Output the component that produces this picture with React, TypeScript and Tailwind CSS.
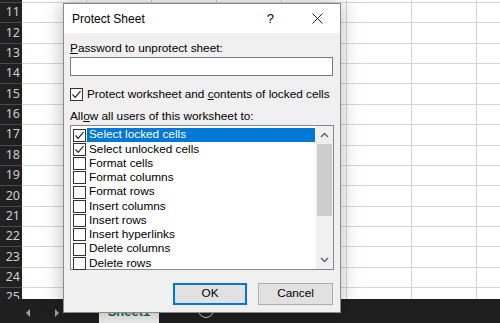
import React from "react";

const rows = [10, 11, 12, 13, 14, 15, 16, 17, 18, 19, 20, 21, 22, 23, 24, 25, 26];
const cols = [0, 1, 2, 3, 4, 5, 6, 7];

const items: { label: string; checked: boolean; selected?: boolean }[] = [
  { label: "Select locked cells", checked: true, selected: true },
  { label: "Select unlocked cells", checked: true },
  { label: "Format cells", checked: false },
  { label: "Format columns", checked: false },
  { label: "Format rows", checked: false },
  { label: "Insert columns", checked: false },
  { label: "Insert rows", checked: false },
  { label: "Insert hyperlinks", checked: false },
  { label: "Delete columns", checked: false },
  { label: "Delete rows", checked: false },
];

function Check({ checked }: { checked: boolean }) {
  return (
    <div className="w-[13px] h-[13px] shrink-0 border border-[#333] bg-white flex items-center justify-center">
      {checked && (
        <svg width="11" height="11" viewBox="0 0 11 11">
          <polyline points="1.5,5.5 4.2,8.3 9.5,2.2" fill="none" stroke="#222" strokeWidth="1.2" />
        </svg>
      )}
    </div>
  );
}

export default function App() {
  return (
    <div className="relative w-[500px] h-[323px] overflow-hidden bg-white font-['Liberation_Sans',Arial,sans-serif]">
      {/* spreadsheet */}
      <div className="flex flex-col h-full">
        <div className="h-[299px] overflow-hidden">
          <div className="flex flex-col -mt-[17.36px]">
            {rows.map((r) => (
              <div key={r} className="flex h-[20.36px] shrink-0">
                <div className="w-[22px] shrink-0 bg-[#202020] border-b border-[#4a4a4a] flex items-center justify-end pr-[2px] text-[12.5px] text-[#cfcfcf] font-['Noto_Sans',sans-serif]">
                  {r}
                </div>
                {cols.map((c) => (
                  <div key={c} className="w-[65px] shrink-0 border-r border-b border-[#d6d6d6] bg-white" />
                ))}
              </div>
            ))}
          </div>
        </div>
        <div className="h-[24px] bg-[#1f1f1f] flex items-start relative">
          <div className="ml-[26px] mt-[10px] w-0 h-0 border-y-[4px] border-y-transparent border-r-[4px] border-r-[#a0a0a0]" />
          <div className="ml-[25px] mt-[10px] w-0 h-0 border-y-[4px] border-y-transparent border-l-[4px] border-l-[#a0a0a0]" />
          <div className="ml-[40px] w-[60px] h-[24px] bg-[#f0f0f0] flex justify-center">
            <span className="text-[13px] font-bold text-[#1d6b3d] leading-none mt-[6px]">Sheet1</span>
          </div>
          <div className="ml-[39px] mt-[3px] w-[16px] h-[16px] rounded-full border border-[#c8c8c8]" />
        </div>
      </div>

      {/* dialog */}
      <div className="absolute left-[63px] top-[3px] w-[278px] h-[310px] border border-[#8a8a8a] bg-[#f0f0f0] shadow-[0_0_18px_rgba(0,0,0,0.28)] flex flex-col text-[11.8px] text-black whitespace-nowrap">
        <div className="h-[29px] bg-white flex items-center shrink-0">
          <span className="ml-[8px] text-[12px]">Protect Sheet</span>
          <span className="ml-auto mr-[38px] text-[13px]">?</span>
          <svg width="11" height="11" viewBox="0 0 11 11" className="mr-[17px]">
            <path d="M0.5 0.5 L10.5 10.5 M10.5 0.5 L0.5 10.5" stroke="#222" strokeWidth="1" />
          </svg>
        </div>
        <div className="flex flex-col px-[6px] pt-[7px]">
          <div className="h-[16px] leading-[16px]">
            <span className="underline">P</span>assword to unprotect sheet:
          </div>
          <div className="mt-[1px] h-[19px] w-[263px] bg-white border border-[#7a7a7a]" />
          <div className="mt-[12px] flex items-center h-[13px]">
            <Check checked />
            <span className="ml-[4px]">
              Protect worksheet and <span className="underline">c</span>ontents of locked cells
            </span>
          </div>
          <div className="mt-[7px] h-[16px] leading-[16px]">
            All<span className="underline">o</span>w all users of this worksheet to:
          </div>
          <div className="mt-[1px] h-[145px] w-[264px] bg-white border border-[#828790] flex">
            <div className="flex-1 flex flex-col pt-[2px] pl-[2px]">
              {items.map((it) => (
                <div key={it.label} className="flex items-center h-[14.25px] shrink-0">
                  <Check checked={it.checked} />
                  <div
                    className={
                      it.selected
                        ? "ml-[1px] flex-1 h-[14px] flex items-center pl-[2px] bg-[#0078d7] text-white"
                        : "ml-[1px] flex-1 h-[14px] flex items-center pl-[2px]"
                    }
                  >
                    {it.label}
                  </div>
                </div>
              ))}
            </div>
            <div className="w-[17px] ml-[1px] bg-[#f0f0f0] flex flex-col items-center">
              <div className="h-[18px] flex items-center justify-center">
                <svg width="9" height="6" viewBox="0 0 9 6">
                  <polyline points="1,5 4.5,1.5 8,5" fill="none" stroke="#606060" strokeWidth="1.4" />
                </svg>
              </div>
              <div className="w-[15px] h-[72px] bg-[#cdcdcd]" />
              <div className="flex-1" />
              <div className="h-[18px] flex items-center justify-center">
                <svg width="9" height="6" viewBox="0 0 9 6">
                  <polyline points="1,1 4.5,4.5 8,1" fill="none" stroke="#606060" strokeWidth="1.4" />
                </svg>
              </div>
            </div>
          </div>
          <div className="mt-[13px] flex justify-end gap-[11px] pr-[1px]">
            <div className="w-[74px] h-[22px] bg-[#e1e1e1] border-2 border-[#0078d7] flex items-center justify-center">OK</div>
            <div className="w-[75px] h-[22px] bg-[#e1e1e1] border border-[#adadad] flex items-center justify-center">Cancel</div>
          </div>
        </div>
      </div>
    </div>
  );
}
